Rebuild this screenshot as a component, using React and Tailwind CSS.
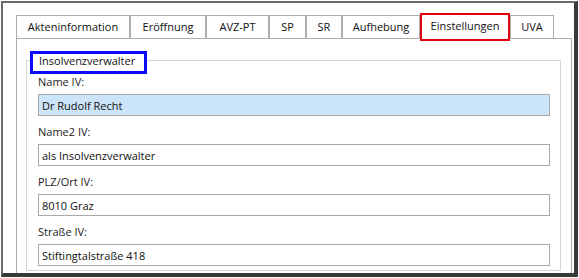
import React from 'react';

// Tab strip of the "Insolvenzverwalter" settings dialog
const TABS = [
    { label: 'Akteninformation', width: 'w-[114px]' },
    { label: 'Eröffnung', width: 'w-[76px]' },
    { label: 'AVZ-PT', width: 'w-[63px]' },
    { label: 'SP', width: 'w-[37px]' },
    { label: 'SR', width: 'w-[36px]' },
    { label: 'Aufhebung', width: 'w-[78px]' },
    { label: 'Einstellungen', width: 'w-[90px]', active: true },
    { label: 'UVA', width: 'w-[44px]' },
];

const FIELDS = [
    { label: 'Name IV:', value: 'Dr Rudolf Recht', focused: true },
    { label: 'Name2 IV:', value: 'als Insolvenzverwalter' },
    { label: 'PLZ/Ort IV:', value: '8010 Graz' },
    { label: 'Straße IV:', value: 'Stiftingtalstraße 418' },
];

const Tab = ({ label, width, active }) => {
    if (active) {
        return (
            <div className={`${width} h-[28px] -mb-[3px] relative z-10 bg-white border-2 border-[#e4000f] flex items-center justify-center pb-[4px]`}>
                <span className="leading-[15px]">{label}</span>
            </div>
        );
    }

    return (
        <div className={`${width} h-[23px] bg-white border border-b-0 border-[#adadad] flex items-center justify-center pb-[2px]`}>
            <span className="leading-[15px]">{label}</span>
        </div>
    );
};

const Field = ({ label, value, focused }) => (
    <div className="flex flex-col">
        <span className="h-[15px] leading-[15px] text-[#1c1c1c]">{label}</span>
        <input
            readOnly
            value={value}
            className={`mt-[5px] h-[22px] w-full border border-[#a9a9a9] px-[3px] py-0 leading-[15px] text-[11px] text-[#111] outline-none
                ${focused ? 'bg-[#cce4f7]' : 'bg-white'}`}
        />
    </div>
);

const App = () => {
    return (
        <div className="w-[579px] h-[278px] bg-white pt-px pl-px font-['Open_Sans',sans-serif] text-[11px] text-[#111]">
            <div className="w-[577px] h-[276px] overflow-hidden bg-white border-t-2 border-l-2 border-r-4 border-b-4 border-t-[#6a6a6a] border-l-[#6a6a6a] border-r-[#3a3a3a] border-b-[#3a3a3a]">
                <div className="pl-[13px] pr-[2px] pt-[10px]">
                    <div className="flex items-end h-[25px]">
                        {TABS.map((tab) => (
                            <Tab key={tab.label} {...tab} />
                        ))}
                    </div>

                    <div className="border border-[#adadad] bg-white pl-[9px] pr-[10px] pt-[21px] pb-[10px]">
                        <div className="relative border border-[#d5d5d5] pl-[11px] pr-[10px] pt-[13px] pb-[4px]">
                            <div className="absolute left-[3px] -top-[10px] w-[117px] h-[23px] bg-white border-[3px] border-[#0a0aff] pl-[6px] leading-[13px]">
                                Insolvenzverwalter
                            </div>

                            <div className="flex flex-col gap-[8px]">
                                {FIELDS.map((field) => (
                                    <Field key={field.label} {...field} />
                                ))}
                            </div>
                        </div>
                    </div>
                </div>
            </div>
        </div>
    );
};

export default App;
